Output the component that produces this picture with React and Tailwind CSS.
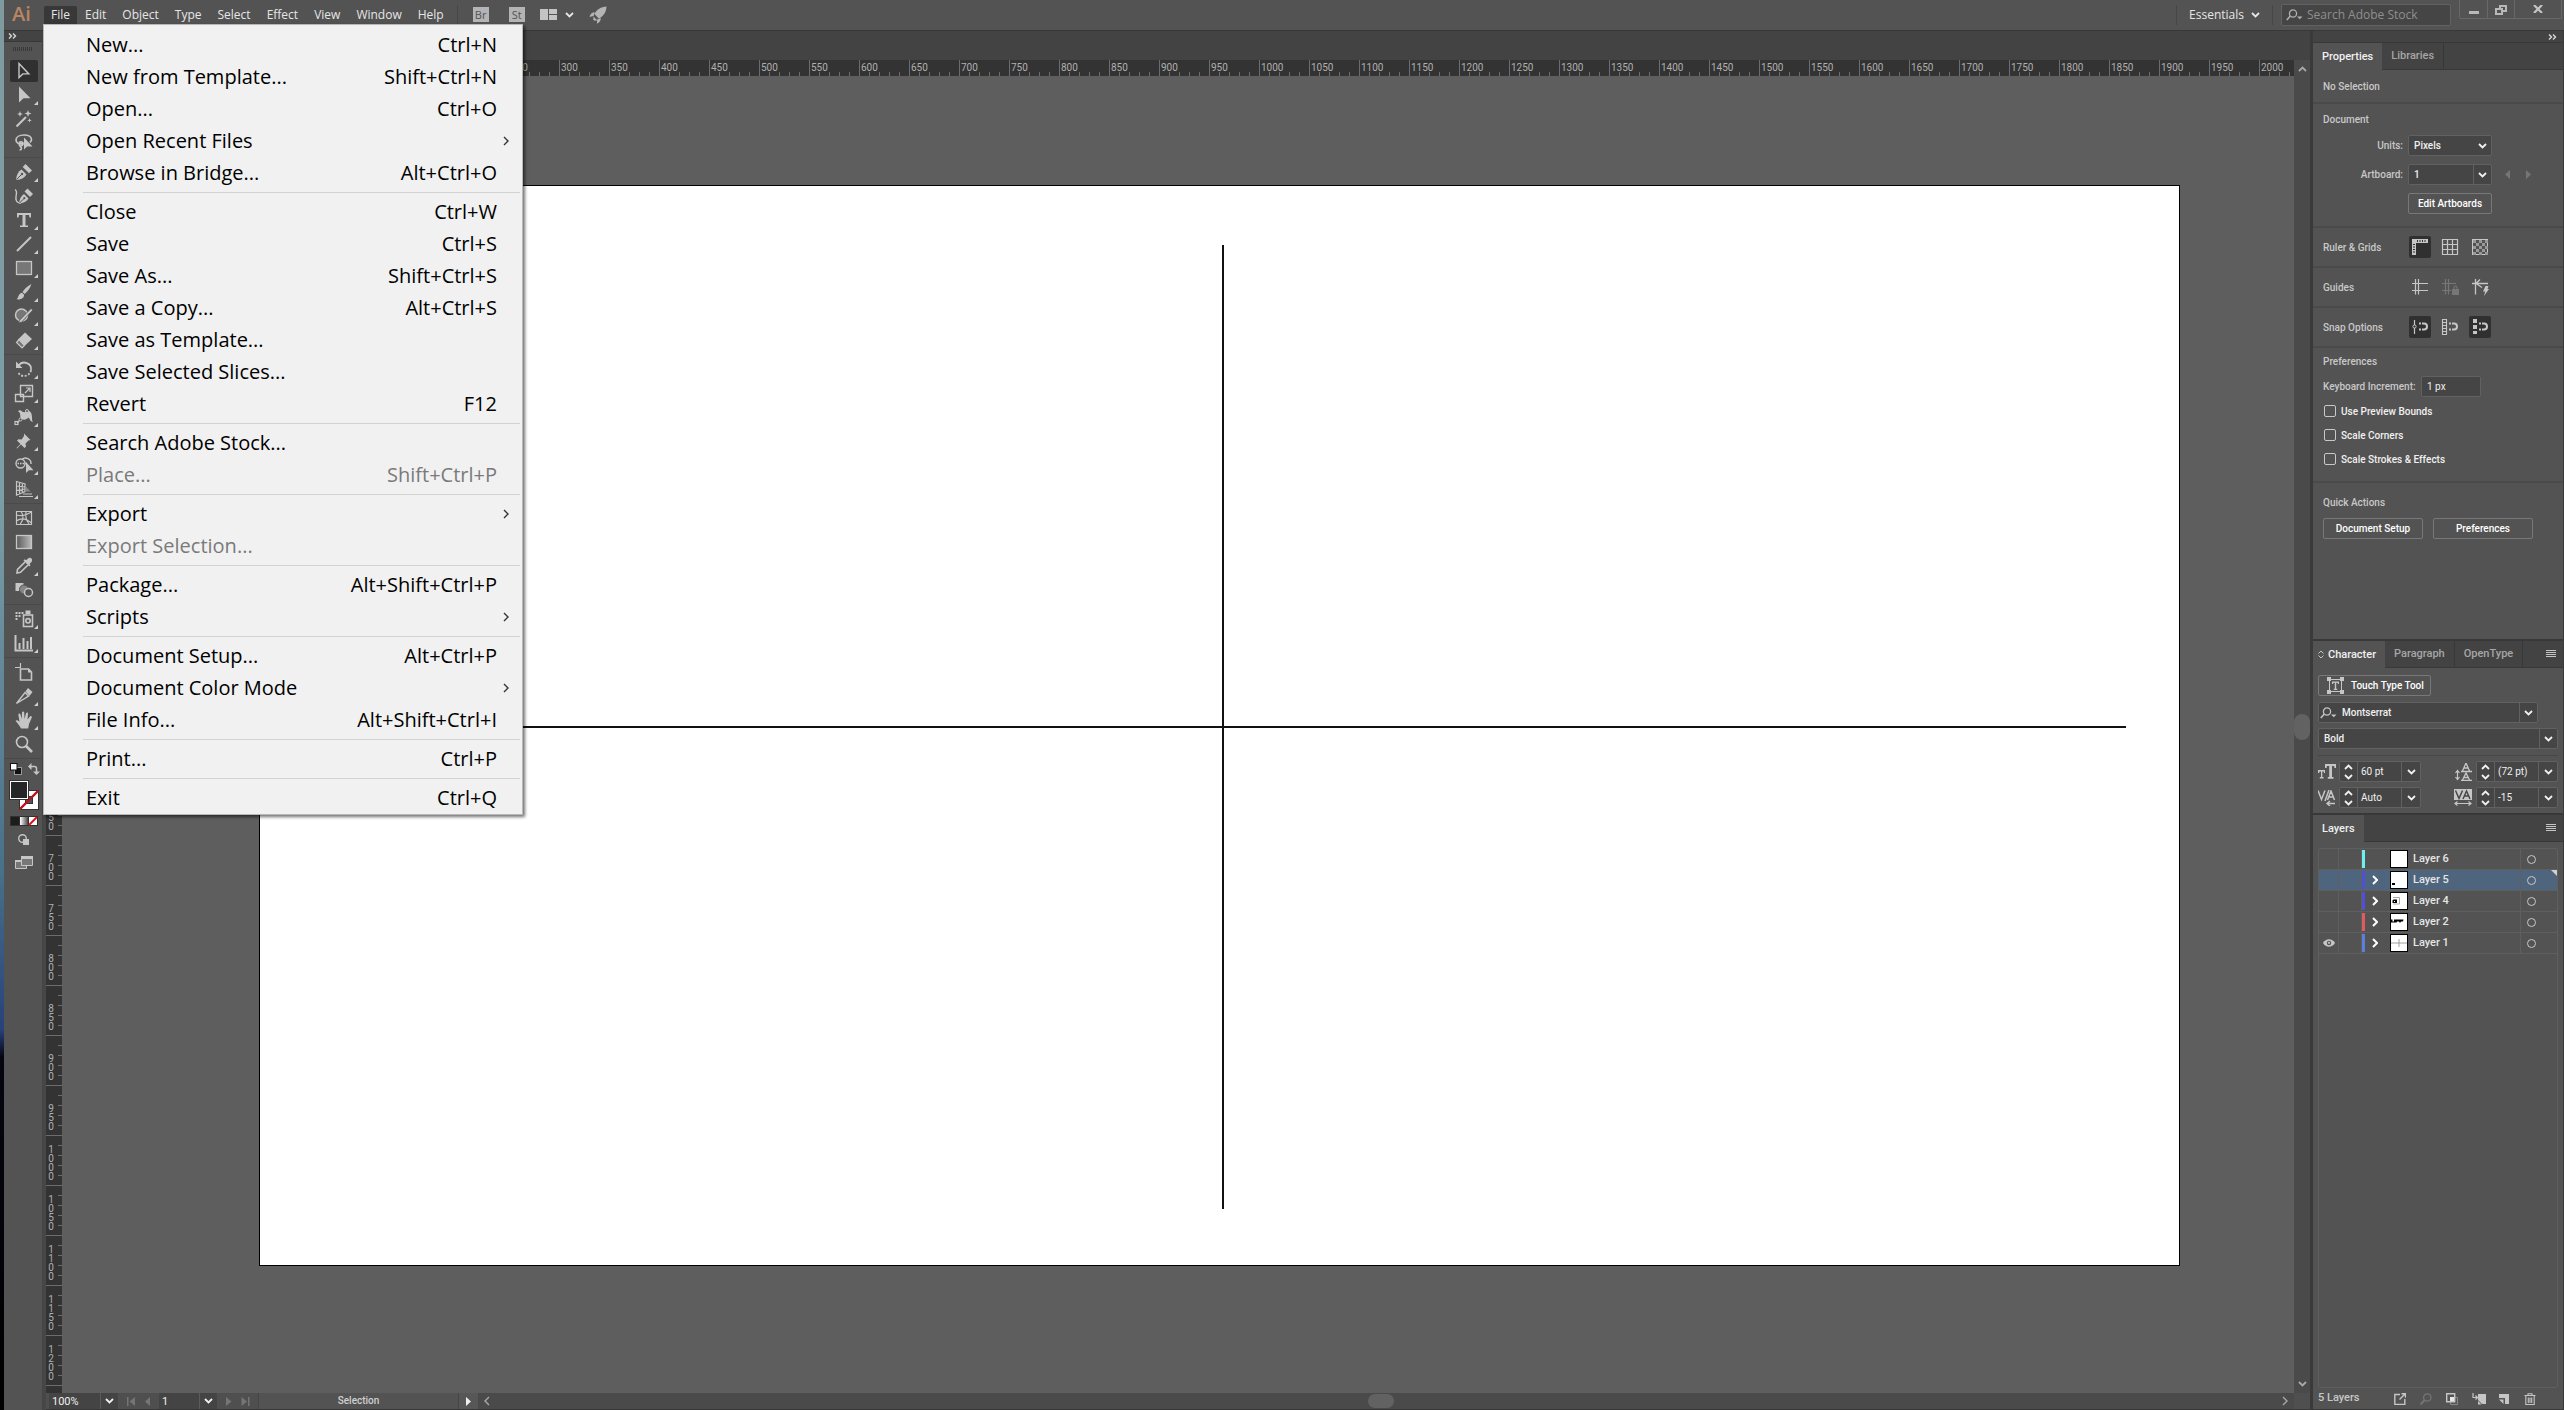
import React from "react";

/* ---------- shared bits ---------- */

function Chevron({ className = "" }) {
  return (
    <svg viewBox="0 0 9 6" className={"h-1.5 w-[9px] shrink-0 " + className} fill="none" stroke="currentColor" strokeWidth="1.8" aria-hidden="true">
      <path d="M1 1l3.5 3.5L8 1" />
    </svg>
  );
}

function ChevronRight({ className = "" }) {
  return (
    <svg viewBox="0 0 6 10" className={"h-2.5 w-1.5 shrink-0 " + className} fill="none" stroke="currentColor" strokeWidth="1.4" aria-hidden="true">
      <path d="M1 1l4 4-4 4" />
    </svg>
  );
}

function DoubleArrow() {
  return (
    <svg viewBox="0 0 9 6" className="h-1.5 w-[9px]" fill="none" stroke="#d8d8d8" strokeWidth="1.4" aria-hidden="true">
      <path d="M1 .5L3.5 3 1 5.5M5 .5L7.500 3 5 5.500" />
    </svg>
  );
}

function SearchDrop({ className = "" }) {
  return (
    <svg viewBox="0 0 17 12" className={"h-3 w-[17px] shrink-0 " + className} aria-hidden="true">
      <circle cx="7" cy="4.500" r="3.600" fill="none" stroke="currentColor" strokeWidth="1.300" />
      <path d="M4.300 7L.8 11" stroke="currentColor" strokeWidth="1.600" />
      <path d="M11 7.500h5.500L13.750 10.300z" fill="currentColor" />
    </svg>
  );
}

function Hamburger() {
  return (
    <button type="button" aria-label="Panel menu" className="flex h-full w-6 items-center justify-center">
      <svg viewBox="0 0 10 8" className="h-2 w-2.5" stroke="#c4c4c4" strokeWidth="1" aria-hidden="true">
        <path d="M0 .5h10M0 2.500h10M0 4.500h10M0 6.500h10" />
      </svg>
    </button>
  );
}

/* ---------- menu bar ---------- */

const menus = ["File", "Edit", "Object", "Type", "Select", "Effect", "View", "Window", "Help"];

function TopBar() {
  return (
    <header className="flex h-[31px] shrink-0 border-b border-[#383838] bg-[#535353] text-xs text-[#e6e6e6]">
      <div className="w-[39px] shrink-0 pl-2 text-xl leading-[28px] font-semibold text-[#b98563]">Ai</div>
      <nav className="flex pt-1.5" aria-label="Main menu">
        {menus.map((m) => (
          <button
            key={m}
            type="button"
            className={
              "h-[18px] rounded-t-xs leading-[18px] " +
              (m === "File" ? "ml-px bg-[#383838] px-[7px]" : "px-2")
            }
          >
            {m}
          </button>
        ))}
      </nav>
      <div className="ml-[5px] flex h-[29px] items-center">
        <span className="h-5 w-px bg-[#474747]" />
        <button type="button" className="ml-[15px] h-[15px] w-4 bg-[#b4b4b4] text-[11px] leading-[15px] text-[#535353]">Br</button>
        <button type="button" className="ml-5 h-[15px] w-4 bg-[#b4b4b4] text-[11px] leading-[15px] text-[#535353]">St</button>
        <button type="button" aria-label="Arrange documents" className="ml-[15px] flex items-center gap-2">
          <svg viewBox="0 0 17 12" className="h-3 w-[17px]" fill="#c4c4c4"><path d="M0 0h8v11H0zM9 0h8v5H9zM9 6h8v5H9z" /></svg>
          <Chevron className="text-[#e6e6e6]" />
        </button>
        <button type="button" aria-label="GPU performance" className="ml-[15px]">
          <svg viewBox="0 0 18 18" className="size-[18px]" fill="#b4b4b4">
            <path d="M17.500.5C12 .8 7.500 3.500 5.500 8l4.200 4.500C14.500 10.500 17.300 6 17.500.5zM5.800 6.200C3 6.300 1.200 8 .5 11c1.600-.7 2.800-.9 4-.7zM11.800 12c0 2.800-1.300 4.800-4 5.700.4-1.600.4-2.800 0-4zM4.600 10.800l3.500 3.500-3 .3-.9-.9z" />
          </svg>
        </button>
      </div>
      <div className="ml-auto flex h-[29px] items-center">
        <span className="h-5 w-px bg-[#474747]" />
        <button type="button" className="ml-3 flex items-center gap-[7px]">
          Essentials <Chevron />
        </button>
        <span className="ml-3 h-5 w-px bg-[#474747]" />
        <label className="ml-2 flex h-[22px] w-[170px] items-center rounded-xs border border-[#626262] bg-[#454545] pl-1">
          <SearchDrop className="text-[#b0b0b0]" />
          <input aria-label="Search Adobe Stock" placeholder="Search Adobe Stock" className="ml-1 w-[130px] bg-transparent outline-none placeholder:text-[#8f8f8f]" />
        </label>
      </div>
      <div className="mr-0.5 ml-2 flex h-[19px] rounded-b-xs border border-t-0 border-[#686868] text-[#c4c4c4]">
        <button type="button" aria-label="Minimize" className="flex w-7 justify-center border-r border-[#686868] pt-[11px]"><span className="h-[3px] w-2.5 bg-[#b8b8b8]" /></button>
        <button type="button" aria-label="Restore" className="flex w-[27px] justify-center border-r border-[#686868] pt-[5px]">
          <svg viewBox="0 0 12 10" className="h-2.5 w-3" fill="none" stroke="#b8b8b8" strokeWidth="2"><path d="M1 4h6v5H1zM5 3.500V1h6v5H8" /></svg>
        </button>
        <button type="button" aria-label="Close" className="flex w-[46px] justify-center pt-[5px]">
          <svg viewBox="0 0 10 8" className="h-2 w-2.5" stroke="#c4c4c4" strokeWidth="2.200"><path d="M1 0l8 8M9 0L1 8" /></svg>
        </button>
      </div>
    </header>
  );
}

/* ---------- File menu ---------- */

const fileMenu = [
  [["New...", "Ctrl+N"], ["New from Template...", "Shift+Ctrl+N"], ["Open...", "Ctrl+O"], ["Open Recent Files", ">"], ["Browse in Bridge...", "Alt+Ctrl+O"]],
  [["Close", "Ctrl+W"], ["Save", "Ctrl+S"], ["Save As...", "Shift+Ctrl+S"], ["Save a Copy...", "Alt+Ctrl+S"], ["Save as Template...", ""], ["Save Selected Slices...", ""], ["Revert", "F12"]],
  [["Search Adobe Stock...", ""], ["Place...", "Shift+Ctrl+P", true]],
  [["Export", ">"], ["Export Selection...", "", true]],
  [["Package...", "Alt+Shift+Ctrl+P"], ["Scripts", ">"]],
  [["Document Setup...", "Alt+Ctrl+P"], ["Document Color Mode", ">"], ["File Info...", "Alt+Shift+Ctrl+I"]],
  [["Print...", "Ctrl+P"]],
  [["Exit", "Ctrl+Q"]],
];

function FileMenu() {
  return (
    <div role="menu" aria-label="File" className="absolute top-6 left-[43px] z-10 w-[480px] border border-[#b8b8b8] bg-[#f1f1f1] pt-1 text-xl text-black shadow-[2px_2px_3px_rgba(0,0,0,0.55)]">
      {fileMenu.map((group, g) => (
        <div key={g} className={"mr-0.5 ml-[39px] " + (g > 0 ? "mt-[3px] border-t border-[#d2d2d2] pt-[3px]" : "")}>
          {group.map(([name, key, off]) => (
            <button
              key={name}
              type="button"
              role="menuitem"
              disabled={off}
              className={"flex h-8 w-full items-center pl-[3px] text-left " + (off ? "text-[#7a7a7a]" : "")}
            >
              <span>{name}</span>
              {key === ">" ? (
                <ChevronRight className="mr-[11px] ml-auto text-[#333]" />
              ) : (
                <span className="mr-[23px] ml-auto">{key}</span>
              )}
            </button>
          ))}
        </div>
      ))}
    </div>
  );
}

/* ---------- tools ---------- */

const C = "#c6c6c6";
const line = { fill: "none", stroke: C, strokeWidth: 1.4 };

const toolGroups = [
  [
    ["Selection", <path d="M5 2.500v14l3.800-3.600h6z" {...line} />, false],
    ["Direct Selection", <path d="M5 1.500v16l4.500-4.300h7z" fill={C} />, true],
    ["Magic Wand", <g><path d="M2.500 17.500L12 8" stroke={C} strokeWidth="2.200" /><path d="M6 2l.8 2.200L9 5l-2.200.8L6 8l-.8-2.200L3 5l2.200-.8zM14 1l.9 2.600 2.600.9-2.600.9L14 8l-.9-2.600-2.600-.9 2.600-.9zM15.500 9l.6 1.700 1.700.6-1.700.6-.6 1.700-.6-1.700-1.700-.6 1.700-.6z" fill={C} /></g>, false],
    ["Lasso", <g><path d="M9 10.500C5 12 2 9.500 2 7c0-3 3.500-5 8-5s7.500 2 7.500 4.500c0 1.200-.5 2-1.500 3M5 9.500c3-1.500 5 .5 3.500 2.500S5 13 5.500 11.500M6 13.500c2 1 2 3.500-.5 3.500" {...line} strokeWidth="1.700" /><path d="M10 4.500v12l3-3h5.500z" fill={C} /></g>, false],
  ],
  [
    ["Pen", <g><path d="M2 18c.5-5 2-8.500 5.500-10.500l5 5C10.500 16 7 17.500 2 18z" fill={C} /><path d="M11.500 2l6.500 6.500-3 2.800L8.700 5z" fill={C} /><path d="M8 6.500l5.500 5.500M2.500 17.500l5-5" stroke="#535353" strokeWidth="1" /><circle cx="8" cy="12" r="1.200" fill="#535353" /></g>, true],
    ["Curvature", <g><path d="M1 3.500C5 6 0 11 2.500 15c1 2 3 2 4.500 2" {...line} /><path d="M5 17.500c.5-4.500 2-7.500 5-9.500l4.500 4.500c-1.500 3-5 4.500-9.500 5z" fill={C} /><path d="M13.500 2.500l5.500 5.500-3 3-5.500-5.500z" fill={C} /><path d="M5.500 17l4.500-4.500" stroke="#535353" /><circle cx="10.300" cy="12.200" r="1.100" fill="#535353" /></g>, false],
    ["Type", <path d="M3 3h14v4.500h-1.500L15 5h-3.500v10.500h2.500V17H6v-1.500h2.500V5H5l-.5 2.500H3z" fill={C} />, true],
    ["Line Segment", <path d="M3 17L17 3" stroke={C} strokeWidth="2" />, true],
    ["Rectangle", <rect x="2.500" y="3.500" width="15" height="13" fill="#777" stroke={C} strokeWidth="1.300" />, true],
    ["Paintbrush", <g><path d="M17.500 2c-4 2-7.500 5.500-9 8l2 2c2.500-2 5.500-5.500 7-10z" fill={C} /><path d="M8 10.700l2 2c.5 3-3 5.300-7.500 4.600 2.300-1.500 1.500-5.800 5.500-6.600z" fill={C} /></g>, true],
    ["Shaper", <g><circle cx="7.500" cy="9" r="6" fill="#777" stroke={C} strokeWidth="1.500" /><path d="M19 4L10.500 13l-3 3.300-3 .7 1-2.800L17 2.500z" fill={C} stroke="#535353" strokeWidth=".8" /></g>, true],
    ["Eraser", <g><path d="M11 2.500l7 6.500-7.500 7h-3L4 12.500v-3z" fill={C} /><path d="M5 9.500l5.500 6L8 18l-5.500-5.500z" fill="#777" stroke={C} strokeWidth="1.200" /></g>, true],
  ],
  [
    ["Rotate", <g><path d="M4.500 6.500C9 .8 18 4.200 17 11" {...line} strokeWidth="1.800" /><path d="M2 2.500v6.500h6.500z" fill={C} /><path d="M17 11c-1 7-11 8.500-13 1.500" {...line} strokeWidth="1.800" strokeDasharray="2 1.600" /></g>, true],
    ["Scale", <g><path d="M1.500 11.500h8v7h-8zM6.500 2.500h12v11h-12z" {...line} /><path d="M11 10l4.500-4.500M12 5h4v4" {...line} strokeWidth="1.200" /></g>, true],
    ["Width", <g><path d="M4 4c3-3 4.500 3 8 .5 2.500-2 6-.5 6 6 0 3 .5 4 1 4.500-3-.5-3-3-4.500-4.500-2 2-4 3-7 1.500C5 10.500 8 7 4 4z" fill={C} /><path d="M3 16l5-5" {...line} /><rect x="1" y="14.500" width="3" height="3" {...line} strokeWidth="1.200" /><circle cx="6.500" cy="12.500" r="1.500" fill="#535353" stroke={C} /><circle cx="13" cy="4" r="1.500" fill="#535353" stroke={C} /></g>, true],
    ["Puppet Warp", <path d="M10 2.500l6.500 6.500-2 .5-3 3 .5 3-1.500 1.500-3.500-3.500-4 4-.5-.5 4-4L3 9.500l1.500-1.300 3.200.3L10 5z" fill={C} />, true],
    ["Shape Builder", <g><circle cx="6.500" cy="8.500" r="4.500" {...line} /><path d="M8 4.500c3-3 9.500-1 9 4.500M5 12.500" {...line} /><path d="M3.500 8.500h10" stroke={C} strokeDasharray="1.500 1" strokeWidth="1.500" /><path d="M12 7v11l2.800-2.700h4.700z" fill={C} /></g>, true],
    ["Perspective Grid", <g><path d="M2.500 2.500l8.500 2.500v7.500l-8.500 3.500zM5.500 3.500v11.500M8.300 4.300v9.500M2.500 7l8.500 1M2.500 11.500l8.500-1.500" {...line} strokeWidth="1.200" /><path d="M11.500 7l5 5.500h-5z" fill="#888" /><path d="M5 17.500h14M9 15h9" stroke={C} strokeWidth="1.200" /></g>, true],
  ],
  [
    ["Mesh", <path d="M2.500 3.500h15v13h-15zM2.500 7c5 1 8 1 15-3M2.500 13c4-3 9-3 15 2M7 3.500c3 4 2 9-1 13M12 4c-1 5 0 8 3 12" {...line} strokeWidth="1.200" />, false],
    ["Gradient", <g><defs><linearGradient id="gt"><stop offset="0" stopColor="#5a5a5a" /><stop offset="1" stopColor="#bbb" /></linearGradient></defs><rect x="2.500" y="3.500" width="15" height="13" fill="url(#gt)" stroke={C} strokeWidth="1.300" /></g>, false],
    ["Eyedropper", <g><path d="M11 6L3.500 13.500 3 17l3.500-.7L14 9" {...line} strokeWidth="1.600" /><path d="M9.500 4.500l1.200-1.200 1.500 1L14 2.500c2.500-2 5.500 1 3.500 3.500L15.500 8l1 1.300-1.200 1.200z" fill={C} /></g>, true],
    ["Blend", <g><path d="M1.500 3h8v8h-8z" fill={C} /><circle cx="10" cy="9.500" r="4.500" fill="#888" stroke="#535353" /><circle cx="14.500" cy="12.500" r="4" fill="#535353" stroke={C} strokeWidth="1.500" /></g>, false],
  ],
  [
    ["Symbol Sprayer", <g><path d="M1.500 3h2v2h-2zM4.500 3h2v2h-2zM7.500 3h2v2h-2zM1.500 6h2v2h-2zM4.500 6h2v2h-2zM1.500 9h2v2h-2zM11.500 1.500h5V5h-5z" fill={C} /><rect x="9.500" y="6" width="9" height="11.500" {...line} strokeWidth="1.600" /><circle cx="14" cy="11.800" r="2.200" {...line} strokeWidth="1.600" /></g>, true],
    ["Column Graph", <path d="M1.500 2v15.500H19M5.500 16v-6M9.500 16V5M13.500 16V8M17 16V4" {...line} strokeWidth="2" />, true],
  ],
  [
    ["Artboard", <g><path d="M6.500 1v4.500H1" {...line} strokeWidth="1.200" /><path d="M6.500 7h8l3 3v8h-11z" {...line} strokeWidth="1.600" /><path d="M14 6.500V10.500h4z" fill={C} /></g>, false],
    ["Slice", <g><path d="M2.500 17.500L11 6.500l3.500 3.500z" {...line} /><path d="M11.500 5.500L14 2l4.500 4-3 4z" fill={C} /></g>, true],
    ["Hand", <path d="M7 18.500C5.500 15.500 3.500 13 1.500 11c1-1.500 2.500-.8 4 .8L4.300 4.500c.2-1.300 1.800-1.300 2.200 0L7.700 9 8 2.500c.3-1.400 2-1.400 2.200 0L10.500 9l1.500-5.500c.5-1.400 2-1 2 .3L13.500 9.500 16 6.500c1-1 2.300 0 1.700 1.200L15 14l-.8 4.500z" fill={C} />, true],
    ["Zoom", <g><circle cx="8" cy="8" r="5.500" {...line} strokeWidth="1.600" /><path d="M12 12l6 6" stroke={C} strokeWidth="2.600" /></g>, false],
  ],
];

function Tools() {
  return (
    <aside aria-label="Tools" className="flex w-[39px] shrink-0 flex-col border-r border-[#444] bg-[#535353]">
      <div className="flex h-[11px] items-center border-b border-[#383838] bg-[#434343] pl-1"><DoubleArrow /></div>
      <div className="mt-[5px] flex h-1 justify-center gap-px pr-px">
        {Array.from({ length: 10 }, (_, i) => <span key={i} className="w-px bg-[#383838]" />)}
      </div>
      <div className="mt-2">
        {toolGroups.map((group, g) => (
          <div key={g} className={"flex flex-col pl-[6px] " + (g > 0 ? "mt-0.5 border-t border-[#4a4a4a] pt-0.5" : "")}>
            {group.map(([name, art, corner]) => (
              <button
                key={name}
                type="button"
                aria-label={name}
                className={"relative my-px flex h-[22px] w-7 items-center justify-center rounded-xs " + (name === "Selection" ? "bg-[#303030]" : "")}
              >
                <svg viewBox="0 0 20 20" className="size-5" aria-hidden="true">{art}</svg>
                {corner && (
                  <svg viewBox="0 0 4 4" className="absolute right-0 bottom-px size-1" fill="#d0d0d0" aria-hidden="true"><path d="M4 0v4H0z" /></svg>
                )}
              </button>
            ))}
          </div>
        ))}
      </div>
      <div className="mt-0.5 border-t border-[#4a4a4a] pt-1">
        <div className="flex justify-between pr-0.5 pl-1.5">
          <button type="button" aria-label="Default fill and stroke">
            <svg viewBox="0 0 12 12" className="size-3"><rect x="4.500" y="4.500" width="7" height="7" fill="#111" stroke="#999" /><rect x=".5" y=".5" width="6.500" height="6.500" fill="#fff" stroke="#111" /></svg>
          </button>
          <button type="button" aria-label="Swap fill and stroke">
            <svg viewBox="0 0 12 12" className="size-3" fill={C}><path d="M0 3.500L3.500 0v7zM8.500 12L5 8.500h7z" /><path d="M3 3.500h3.500q2 0 2 2V9" fill="none" stroke={C} strokeWidth="1.500" /></svg>
          </button>
        </div>
        <svg viewBox="0 0 30 31" className="mt-[5px] ml-[5px] h-[31px] w-[30px]" role="img" aria-label="Fill and stroke">
          <rect x="10.500" y="10.500" width="19" height="19" fill="#fff" stroke="#333" />
          <path d="M11 29L29 11" stroke="#c1121c" strokeWidth="2" />
          <rect x="16.500" y="16.500" width="7" height="7" fill="#535353" stroke="#333" />
          <path d="M11 29L29 11" stroke="#c1121c" strokeWidth="2" />
          <rect x=".5" y=".5" width="19" height="19" fill="#fff" stroke="#333" />
          <rect x="2" y="2" width="16" height="16" fill="#262626" />
        </svg>
        <svg viewBox="0 0 28 10" className="mt-[5px] ml-1.5 h-2.5 w-7" role="img" aria-label="Color, gradient, none">
          <defs><linearGradient id="gm"><stop offset="0" stopColor="#fff" /><stop offset="1" stopColor="#444" /></linearGradient></defs>
          <rect width="28" height="10" fill="#303030" />
          <rect x="1" y="1" width="8" height="8" fill="#1c1c1c" />
          <rect x="10" y="1" width="8" height="8" fill="url(#gm)" />
          <rect x="19" y="1" width="8" height="8" fill="#fff" />
          <path d="M19 9l8-8" stroke="#e01019" strokeWidth="2" />
        </svg>
        <button type="button" aria-label="Drawing mode" className="mt-2 block w-full pl-0.5">
          <svg viewBox="0 0 12 12" className="mx-auto size-3"><circle cx="4.500" cy="4.500" r="3.800" {...line} /><path d="M5 5h6v6H5z" fill={C} /></svg>
        </button>
        <button type="button" aria-label="Screen mode" className="mt-2.5 block w-full pl-0.5">
          <svg viewBox="0 0 18 13" className="mx-auto h-[13px] w-[18px]"><path d="M.5 4.500h11v8H.5z" fill="#777" stroke={C} /><path d="M6.500.5h11v9h-11z" fill="#777" stroke={C} /><path d="M6 0h12v3H6zM0 4h6v2H0z" fill={C} /></svg>
        </button>
      </div>
    </aside>
  );
}

/* ---------- document area ---------- */

const rulerText = "font-['Roboto',sans-serif] text-[10px] text-[#b0b0b0]";

function HRuler() {
  return (
    <div className={"flex h-4 overflow-hidden bg-[#333] leading-4 " + rulerText}>
      <div className="-ml-[3px] flex">
        {Array.from({ length: 46 }, (_, i) => (
          <div key={i} className="relative flex w-[50px] shrink-0 items-end border-l border-[#6c6c6c]">
            <span className="absolute top-0 left-px">{Math.abs(-200 + 50 * i)}</span>
            {[0, 1, 2, 3].map((k) => <span key={k} className="h-1 w-2.5 border-r border-[#6c6c6c]" />)}
          </div>
        ))}
      </div>
    </div>
  );
}

function VRuler() {
  return (
    <div className={"w-4 shrink-0 overflow-hidden bg-[#333] leading-[9px] " + rulerText}>
      <div className="mt-[25px]">
        {Array.from({ length: 26 }, (_, i) => (
          <div key={i} className="flex h-[50px] border-t border-[#6c6c6c]">
            <div className="flex w-2.5 flex-col items-center justify-end pb-1">
              {String(Math.abs(-50 + 50 * i)).split("").map((d, k) => <span key={k}>{d}</span>)}
            </div>
            <div className="ml-auto flex flex-col">
              {[0, 1, 2, 3].map((k) => <span key={k} className="h-2.5 w-1 border-b border-[#6c6c6c]" />)}
            </div>
          </div>
        ))}
        <div className="border-t border-[#6c6c6c]" />
      </div>
    </div>
  );
}

function StatusBar() {
  return (
    <footer className="flex h-[17px] items-stretch border-b border-[#383838] bg-[#4a4a4a] font-['Roboto','Open_Sans',sans-serif] text-[11px] leading-4 text-[#f0f0f0]">
      <div className="flex w-[432px] items-center bg-[#4f4f4f]">
        <input aria-label="Zoom level" defaultValue="100%" className="ml-[3px] h-full w-[51px] rounded-tl-xs bg-[#444] pl-[3px] outline-none" />
        <button type="button" aria-label="Zoom presets" className="flex h-full w-[18px] items-center justify-center border-l border-[#5c5c5c] bg-[#444]"><Chevron /></button>
        <svg viewBox="0 0 24 9" className="ml-[9px] h-[9px] w-6" fill="#757575"><path d="M0 0h1.500v9H0zM8 0v9L2.500 4.500zM23 0v9l-5-4.500z" /></svg>
        <input aria-label="Artboard number" defaultValue="1" className="ml-2 h-full w-10 bg-[#444] pl-[3px] outline-none" />
        <button type="button" aria-label="Artboard list" className="flex h-full w-[18px] items-center justify-center border-l border-[#5c5c5c] bg-[#444]"><Chevron /></button>
        <svg viewBox="0 0 24 9" className="ml-[9px] h-[9px] w-6" fill="#757575"><path d="M0 0v9l5.500-4.500zM15.500 0v9l5.500-4.500zM22 0h1.500v9H22z" /></svg>
        <span className="ml-2 flex-1 border-x border-[#454545] bg-[#535353] text-center text-[10px] font-medium text-[#d0d0d0]">Selection</span>
        <button type="button" aria-label="Status menu" className="flex h-full w-[19px] items-center justify-center bg-[#575757]"><svg viewBox="0 0 5 9" className="h-[9px] w-[5px]" fill="#f0f0f0"><path d="M0 0v9l5-4.500z" /></svg></button>
      </div>
      <div className="flex flex-1 items-center justify-between pr-1.5 pl-1.5 text-[#a8a8a8]">
        <ChevronRight className="rotate-180" />
        <span className="mr-2.5 h-3.5 w-[26px] rounded-full bg-[#626262]" />
        <ChevronRight />
      </div>
      <span className="w-4 bg-[#4f4f4f]" />
    </footer>
  );
}

function DocumentArea() {
  return (
    <main className="flex min-w-0 flex-1 flex-col border-l-[3px] border-[#474747]">
      <div className="h-[29px] shrink-0 bg-[#434343]" />
      <div className="flex min-h-0 flex-1">
        <VRuler />
        <div className="flex min-w-0 flex-1 flex-col">
          <HRuler />
          <div className="relative min-h-0 flex-1 overflow-hidden bg-[#5e5e5e]">
            <div className="absolute top-[109px] right-[114px] bottom-[127px] left-[197px] border border-black bg-white">
              <span className="absolute top-[59px] right-[955px] bottom-[56px] w-0.5 bg-[#111]" />
              <span className="absolute top-1/2 right-[53px] left-[60px] h-0.5 bg-[#111]" />
            </div>
          </div>
        </div>
        <div className="flex w-4 shrink-0 flex-col items-center justify-between bg-[#4a4a4a] pt-1.5 pb-1.5 text-[#a8a8a8]">
          <Chevron className="rotate-180" />
          <span className="h-[26px] w-4 rounded-full bg-[#626262]" />
          <Chevron />
        </div>
      </div>
      <StatusBar />
    </main>
  );
}

/* ---------- right-hand panels ---------- */

function TabBar({ tabs, menu, grip }) {
  return (
    <div className="flex h-[27px] shrink-0 bg-[#434343] text-[11px] leading-[26px]" role="tablist">
      {tabs.map((t, i) => (
        <button
          key={t}
          type="button"
          role="tab"
          aria-selected={i === 0}
          className={
            "flex items-center gap-1 px-[9px] " +
            (i === 0 ? "bg-[#535353] text-[#f0f0f0]" : "border-r border-b border-[#383838] text-[#a6a6a6]")
          }
        >
          {grip && i === 0 && (
            <svg viewBox="0 0 6 9" className="-ml-1 h-[9px] w-1.5" fill="none" stroke="#c4c4c4" aria-hidden="true"><path d="M.5 3.500L3 1l2.500 2.500M.5 5.500L3 8l2.500-2.500" /></svg>
          )}
          {t}
        </button>
      ))}
      <div className="flex flex-1 justify-end border-b border-[#383838]">{menu && <Hamburger />}</div>
    </div>
  );
}

const btn = "h-[21px] rounded-xs border border-[#787878] text-center text-white";

function Combo({ label, value, className = "", icon, divider = true }) {
  return (
    <div className={"relative flex h-[21px] items-center rounded-xs border border-[#616161] bg-[#454545] text-[#f0f0f0] " + className}>
      {icon}
      <select aria-label={label} defaultValue={value} className="h-full min-w-0 flex-1 appearance-none bg-transparent pl-[5px] outline-none">
        <option>{value}</option>
      </select>
      <span className={"pointer-events-none flex h-full w-[18px] items-center justify-center " + (divider ? "border-l border-[#616161]" : "")}><Chevron /></span>
    </div>
  );
}

function StepCombo({ label, value }) {
  return (
    <div className="flex h-[21px] w-[82px] rounded-xs border border-[#616161] bg-[#454545] font-normal text-[#f0f0f0]">
      <button type="button" aria-label={label + " step"} className="flex w-[17px] flex-col items-center justify-center gap-1">
        <Chevron className="rotate-180" />
        <Chevron />
      </button>
      <input aria-label={label} defaultValue={value} className="w-[45px] border-x border-[#616161] bg-transparent pl-[3px] outline-none" />
      <button type="button" aria-label={label + " presets"} className="flex flex-1 items-center justify-center"><Chevron /></button>
    </div>
  );
}

function IconRow({ label, items }) {
  return (
    <div className="flex h-10 items-center border-b-2 border-[#4a4a4a] pl-2.5">
      <span className="w-[86px]">{label}</span>
      <div className="flex gap-2">
        {items.map(([name, on, art]) => (
          <button key={name} type="button" aria-label={name} aria-pressed={on} className={"flex size-[22px] items-center justify-center rounded-xs " + (on ? "bg-[#303030]" : "")}>
            <svg viewBox="0 0 18 18" className="size-[18px]" aria-hidden="true">{art}</svg>
          </button>
        ))}
      </div>
    </div>
  );
}

const magnet = (x) => (
  <g>
    <path d={`M${x + 3} 5.500h2a3 3 0 0 1 0 6h-2`} fill="none" stroke={C} strokeWidth="2" />
    <path d={`M${x} 4.500h2v2h-2zM${x} 10.500h2v2h-2z`} fill={C} />
  </g>
);

const rulerIcons = [
  ["Show rulers", true, <g><path d="M1 1h16v4H5v12H1z" fill={C} /><path d="M6.500 2v2M9 2v2M11.500 2v2M14 2v2M2 6.500h2M2 9h2M2 11.500h2M2 14h2" stroke="#303030" /></g>],
  ["Show grid", false, <path d="M1.500 1.500h15v15h-15zM6.500 1.500v15M11.500 1.500v15M1.500 6.500h15M1.500 11.500h15" {...line} strokeWidth="1.200" />],
  ["Show transparency grid", false, <g><rect x="1.500" y="1.500" width="15" height="15" fill="none" stroke={C} /><path d="M2 2h3v3H2zM8 2h3v3H8zM14 2h3v3h-3zM5 5h3v3H5zM11 5h3v3h-3zM2 8h3v3H2zM8 8h3v3H8zM14 8h3v3h-3zM5 11h3v3H5zM11 11h3v3h-3zM2 14h3v3H2zM8 14h3v3H8zM14 14h3v3h-3z" fill="#9a9a9a" /></g>],
];
const guideIcons = [
  ["Show guides", false, <path d="M4.500 1v15.500M7.500 1v15.500M1 5.500h16M1 12.500h16" {...line} strokeWidth="1.200" />],
  ["Lock guides", false, <g><path d="M4.500 1v15.500M7.500 1v15.500M1 5.500h14M1 12.500h9" fill="none" stroke="#777" strokeWidth="1.200" /><path d="M11 11h7v6h-7zM12.500 11V9.500a2 2 0 0 1 4 0V11h-1V9.500a1 1 0 0 0-2 0V11z" fill="#777" /></g>],
  ["Smart guides", false, <g><path d="M4.500 1v15.500M1 5.500h16M9 1.500l-4 4 6 4" {...line} strokeWidth="1.300" /><path d="M14.500 8h3l-1 3H18l-5 7 1.200-4.500H12z" fill={C} /></g>],
];
const snapIcons = [
  ["Snap to point", true, <g><path d="M3.500 2v14" stroke={C} strokeWidth="1.200" /><circle cx="3.500" cy="8.500" r="1.600" fill="#303030" stroke={C} />{magnet(8)}</g>],
  ["Snap to grid", false, <g><path d="M1.500 1v16M5.500 1v16M1 1.500h5M1 4.500h5M1 7.500h5M1 10.500h5M1 13.500h5M1 16.500h5" {...line} strokeWidth="1.100" />{magnet(8)}</g>],
  ["Snap to pixel", true, <g><path d="M2 1h4v4H2zM2 7h4v4H2zM2 13h4v3H2z" fill={C} />{magnet(8)}</g>],
];

function Properties() {
  return (
    <section aria-label="Properties" className="flex h-[596px] flex-col">
      <TabBar tabs={["Properties", "Libraries"]} />
      <p className="h-[34px] border-b-2 border-[#4a4a4a] pl-2.5 leading-[34px]">No Selection</p>
      <div className="h-[124px] border-b-2 border-[#4a4a4a] pt-2">
        <h2 className="pl-2.5 leading-4">Document</h2>
        <div className="mt-[7px] grid grid-cols-[90px_84px_auto] items-center gap-x-[5px] gap-y-2">
          <span className="text-right">Units:</span>
          <Combo label="Units" value="Pixels" divider={false} />
          <span />
          <span className="text-right">Artboard:</span>
          <Combo label="Artboard" value="1" />
          <svg viewBox="0 0 27 9" className="ml-2 h-[9px] w-[27px]" fill="#757575" aria-hidden="true"><path d="M5 0v9L0 4.500zM21 0v9l5-4.500z" /></svg>
          <button type="button" className={btn + " col-start-2"}>Edit Artboards</button>
        </div>
      </div>
      <IconRow label="Ruler & Grids" items={rulerIcons} />
      <IconRow label="Guides" items={guideIcons} />
      <IconRow label="Snap Options" items={snapIcons} />
      <div className="h-[135px] border-b-2 border-[#4a4a4a] pt-1.5 pl-2.5">
        <h2 className="leading-4">Preferences</h2>
        <label className="mt-1.5 flex h-[21px] items-center justify-between pr-[82px] whitespace-nowrap">
          Keyboard Increment:
          <input defaultValue="1 px" className="h-[21px] w-[60px] shrink-0 rounded-xs border border-[#616161] bg-[#454545] pl-[5px] font-normal text-[#f0f0f0] outline-none" />
        </label>
        <div className="mt-0.5">
          {["Use Preview Bounds", "Scale Corners", "Scale Strokes & Effects"].map((t) => (
            <label key={t} className="flex h-6 items-center gap-[5px] text-[#f0f0f0]">
              <input type="checkbox" className="ml-px size-3 appearance-none rounded-xs border border-[#c8c8c8]" />
              {t}
            </label>
          ))}
        </div>
      </div>
      <h2 className="mt-3 pl-2.5 leading-4">Quick Actions</h2>
      <div className="mt-[7px] flex gap-2.5 pl-2.5">
        <button type="button" className={btn + " w-[100px]"}>Document Setup</button>
        <button type="button" className={btn + " w-[100px]"}>Preferences</button>
      </div>
    </section>
  );
}

function Character() {
  return (
    <section aria-label="Character" className="h-[174px] border-t-2 border-[#383838]">
      <TabBar tabs={["Character", "Paragraph", "OpenType"]} menu grip />
      <div className="px-[5px] pt-[7px]">
        <button type="button" className={btn + " flex w-[113px] items-center gap-[7px] pl-2"}>
          <svg viewBox="0 0 17 17" className="size-[17px]" aria-hidden="true"><path d="M2.500 2.500h12v12h-12z" {...line} strokeWidth="1" /><path d="M0 0h4v4H0zM13 0h4v4h-4zM0 13h4v4H0zM13 13h4v4h-4zM5 4.500h7V7h-1l-.5-1.300H9.200v6h1V13H6.800v-1.300h1v-6H6.500L6 7H5z" fill={C} /></svg>
          Touch Type Tool
        </button>
        <Combo label="Font family" value="Montserrat" className="mt-1.5 mr-5" icon={<SearchDrop className="ml-px text-[#c4c4c4]" />} />
        <Combo label="Font style" value="Bold" className="mt-[5px]" />
        <hr className="mt-1.5 border-[#484848]" />
        <div className="mt-[5px] grid grid-cols-[21px_82px_1fr_21px_82px] items-center gap-y-[5px]">
          <svg viewBox="0 0 18 15" className="h-[15px] w-[18px]" fill={C} role="img" aria-label="Font size"><path d="M0 6h7v3H6l-.3-1.500H4.300V13H5.500v1.500H1.800V13H3V7.500H1.500L1.200 9H0zM7 0h11v4h-1.500L16 2h-2v11h1.500v1.800H9.800V13h1.400V2H9l-.5 2H7z" /></svg>
          <StepCombo label="Font size" value="60 pt" />
          <span />
          <svg viewBox="0 0 17 18" className="h-[18px] w-[17px]" role="img" aria-label="Leading"><path d="M7.500 8L11 0l3.500 8M8.500 5h5M7.500 17L11 10l3.500 7M8.500 14.500h5M6 8.500h11M6 17.500h11" {...line} strokeWidth="1.300" /><path d="M2.500 8v8M.5 10l2-2.500 2 2.500M.5 14l2 2.500 2-2.500" {...line} strokeWidth="1.200" /></svg>
          <StepCombo label="Leading" value="(72 pt)" />
          <svg viewBox="0 0 18 16" className="h-4 w-[18px]" role="img" aria-label="Kerning"><path d="M0 .5l3.500 9L7 .5M11 0L7 11M9.500 10L13 1l3.500 9M11 7h4.500" {...line} strokeWidth="1.500" /><path d="M9 13.500h8M12 11l-3 2.500 3 2.500" {...line} /></svg>
          <StepCombo label="Kerning" value="Auto" />
          <span />
          <svg viewBox="0 0 18 17" className="-ml-px h-[17px] w-[18px]" role="img" aria-label="Tracking"><path d="M0 0h18v11H0z" fill={C} /><path d="M1.500 1.500L5 9.500l3.500-8M9 10l3.500-8L16 10M10.500 7h4.500" fill="none" stroke="#454545" strokeWidth="1.500" /><path d="M1 14.500h16M3.500 12.500l-2.500 2 2.500 2M14.500 12.500l2.500 2-2.500 2" {...line} strokeWidth="1.200" /></svg>
          <StepCombo label="Tracking" value="-15" />
        </div>
      </div>
    </section>
  );
}

const layers = [
  { name: "Layer 6", bar: "bg-[#6cf0f0]" },
  { name: "Layer 5", bar: "bg-[#4f4fd8]", open: true, active: true, art: <path d="M1 11h3v2H1z" /> },
  { name: "Layer 4", bar: "bg-[#4f4fd8]", open: true, art: <g><path d="M1.500 7.500l1-1H6V10H1.500zM3 8v1h1V8z" /><path d="M2 4.500h6.500v6.500H2" fill="none" stroke="#aaa" /></g> },
  { name: "Layer 2", bar: "bg-[#e05a5e]", open: true, art: <path d="M0 5.500h1.500v2H3v-2h9.500l-.5 2h-2l-.5 1h-1l-.5-1H6l-.5 1H0z" /> },
  { name: "Layer 1", bar: "bg-[#5a7fe0]", open: true, eye: true, art: <path d="M0 8h16M8 4v8" stroke="#888" strokeWidth=".8" /> },
];

function Layers() {
  return (
    <section aria-label="Layers" className="flex min-h-0 flex-1 flex-col border-t-2 border-[#383838]">
      <TabBar tabs={["Layers"]} menu />
      <ul className="mx-[5px] mt-1.5 flex-1 rounded-xs border border-[#5f5f5f] text-[11px]">
        {layers.map((l) => (
          <li key={l.name} className={"relative flex h-[21px] items-center border-b border-[#5f5f5f] text-[#e6e6e6] " + (l.active ? "bg-[#4f657e]" : "")}>
            <button type="button" aria-label={"Toggle " + l.name} className="flex h-full w-5 shrink-0 items-center justify-center border-r border-[#5f5f5f]">
              {l.eye && (
                <svg viewBox="0 0 12 8" className="h-2 w-3"><path d="M0 4c3-5 9-5 12 0-3 5-9 5-12 0z" fill={C} /><circle cx="6" cy="4" r="2.200" fill="#535353" /><circle cx="6" cy="3.800" r="1.100" fill={C} /></svg>
              )}
            </button>
            <span className="h-full w-[23px] shrink-0 border-r border-[#5f5f5f]" />
            <span className={"h-[18px] w-[3px] shrink-0 " + l.bar} />
            <span className="flex w-5 shrink-0 justify-center text-white">
              {l.open && <ChevronRight className="stroke-2" />}
            </span>
            <svg viewBox="0 0 16 16" className="ml-[5px] size-[18px] shrink-0 border border-black bg-white">{l.art}</svg>
            <span className="flex-1 self-stretch border-r border-[#5f5f5f] pl-[5px] leading-5">{l.name}</span>
            <button type="button" aria-label={"Target " + l.name} className="mr-[21px] ml-1.5 size-[9px] rounded-full border border-[#c8c8c8]" />
            {l.active && <svg viewBox="0 0 6 6" className="absolute top-0 right-0 size-1.5" fill="#d0d0d0"><path d="M0 0h6v6z" /></svg>}
          </li>
        ))}
      </ul>
      <div className="flex h-[21px] shrink-0 items-center pr-[27px] pl-[5px]">
        <span className="flex-1 text-[11px]">5 Layers</span>
        <div className="flex gap-3.5">
          <svg viewBox="0 0 12 12" className="size-3"><path d="M6 1.500H.8v10h10V6M5.500 6.500l5.500-5.500M7.500.7h4v4" {...line} /></svg>
          <svg viewBox="0 0 12 12" className="size-3"><circle cx="7.300" cy="4.500" r="3.700" fill="none" stroke="#757575" strokeWidth="1.300" /><path d="M4.500 7.300L.5 11.500" stroke="#757575" strokeWidth="2" /></svg>
          <svg viewBox="0 0 12 12" className="size-3"><path d="M4.500 4.500h7v7h-7z" fill="none" stroke="#888" /><path d="M4 4h4.500v4.500H4z" fill="#e6e6e6" /><path d="M.7.700h8v8h-8z" {...line} /></svg>
          <svg viewBox="0 0 14 12" className="-mr-0.5 h-3 w-3.5"><path d="M6 1h8v10h-4L6 7z" fill={C} /><path d="M6 8l3.500 3.500H6z" fill={C} /><path d="M1 0v4.500h4M3.500 2.500l2 2-2 2" {...line} strokeWidth="1.200" /></svg>
          <svg viewBox="0 0 12 12" className="size-3" fill={C}><path d="M1 1h10v10H7V5H1zM1 6.500h4.500V11z" /></svg>
          <svg viewBox="0 0 12 12" className="size-3"><path d="M.5 2.500h11M4 2.500V.7h4v1.800M1.800 2.500v9h8.400v-9M4.300 4.500v5.500M6 4.500v5.500M7.700 4.500v5.500" {...line} strokeWidth="1.100" /></svg>
        </div>
      </div>
    </section>
  );
}

export default function App() {
  return (
    <div className="flex h-screen overflow-hidden bg-[#383838] font-['Open_Sans','Noto_Sans',sans-serif]">
      <div className="w-1 shrink-0 bg-[linear-gradient(to_bottom,#7f9ba0_0,#7c9ea6_35%,#47708a_62%,#27427a_73%,#050510_75%,#000_100%)]" />
      <div className="flex min-w-0 flex-1 flex-col">
        <TopBar />
        <div className="flex min-h-0 flex-1">
          <Tools />
          <DocumentArea />
          <aside className="flex w-[254px] shrink-0 flex-col border-r border-l-[3px] border-[#3a3a3a] bg-[#535353] font-['Roboto','Open_Sans',sans-serif] text-[10px] font-medium text-[#c8c8c8]">
            <div className="flex h-3 shrink-0 items-center justify-end border-b border-[#383838] bg-[#434343] pr-1.5"><DoubleArrow /></div>
            <Properties />
            <Character />
            <Layers />
            <div className="h-px shrink-0 bg-[#383838]" />
          </aside>
        </div>
      </div>
      <FileMenu />
    </div>
  );
}
